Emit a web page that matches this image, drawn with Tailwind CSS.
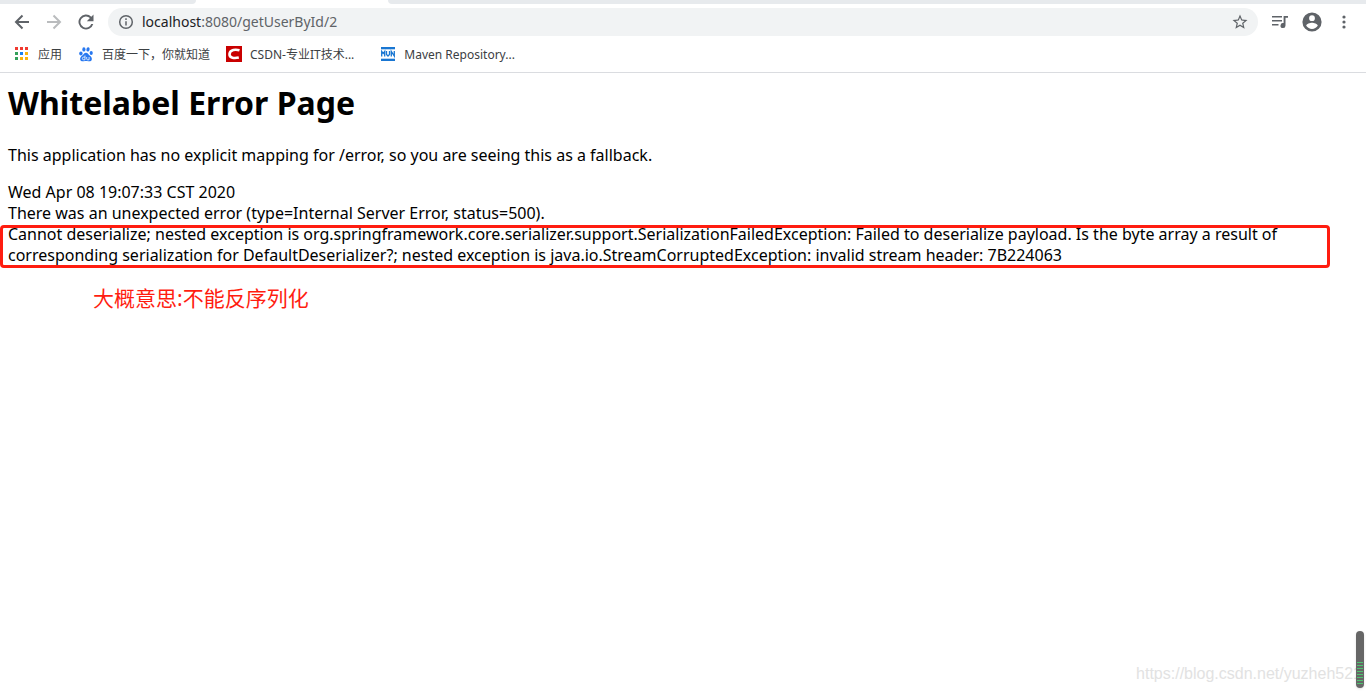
<!DOCTYPE html>
<html lang="zh-CN">
<head>
<meta charset="utf-8">
<meta name="viewport" content="width=device-width, initial-scale=1">
<title>localhost:8080/getUserById/2</title>
<script src="https://cdn.jsdelivr.net/npm/@tailwindcss/browser@4"></script>
</head>
<body class="relative flex min-h-screen flex-col overflow-x-hidden bg-white font-['Noto_Sans','Noto_Sans_CJK_SC',sans-serif] text-black">

<header class="border-b border-[#dadce0]">
  <!-- Bottom edge of the tab strip -->
  <div class="flex h-1">
    <div class="w-49 rounded-br-md bg-[#e7eaed]"></div>
    <div class="w-48"></div>
    <div class="flex-1 rounded-bl-md bg-[#e7eaed]"></div>
  </div>

  <div class="flex h-9 items-center pr-3 pl-3 text-[#5f6368]">
    <nav class="flex gap-3 pr-3">
      <button type="button" aria-label="Back" class="flex size-5 items-center justify-center">
        <svg class="size-5 shrink-0" viewBox="0 0 20 20" fill="none" stroke="currentColor" stroke-width="2"><path d="M17 10H4.500M10.500 3.500 4 10l6.500 6.500"/></svg>
      </button>
      <button type="button" aria-label="Forward" disabled class="flex size-5 items-center justify-center text-[#babcbe]">
        <svg class="size-5 shrink-0" viewBox="0 0 20 20" fill="none" stroke="currentColor" stroke-width="2"><path d="M3 10h12.500M9.500 3.500 16 10l-6.500 6.500"/></svg>
      </button>
      <button type="button" aria-label="Reload" class="flex size-5 items-center justify-center">
        <svg class="size-5 shrink-0" viewBox="0 0 24 24" fill="currentColor"><path d="M18.400 5.600A9 9 0 1 0 20.700 14.300H18.300A6.700 6.700 0 1 1 16.700 7.300L13 11H21V3Z"/></svg>
      </button>
    </nav>
    <div class="flex h-7 min-w-0 flex-1 items-center rounded-full bg-[#f1f3f4] px-2.5">
      <svg class="size-4 shrink-0" viewBox="0 0 16 16" fill="none" stroke="currentColor" stroke-width="1.500"><circle cx="8" cy="8" r="6.300"/><path d="M8 7.200v4.300M8 4.300v1.600"/></svg>
      <a href="#" class="ml-2 flex-1 truncate text-sm"><span class="text-[#202124]">localhost</span>:8080/getUserById/2</a>
      <button type="button" aria-label="Bookmark this page" class="flex size-4 items-center justify-center">
        <svg class="size-[18px] shrink-0" viewBox="0 0 24 24" fill="currentColor"><path d="M22 9.240l-7.190-.62L12 2 9.190 8.630 2 9.240l5.460 4.730L5.820 21 12 17.270 18.180 21l-1.630-7.030L22 9.240zM12 15.400l-3.760 2.270 1-4.280-3.320-2.880 4.380-.38L12 6.100l1.710 4.040 4.380.38-3.320 2.880 1 4.280L12 15.400z"/></svg>
      </button>
    </div>
    <div class="flex items-center gap-3 pl-3">
      <button type="button" aria-label="Media controls" class="flex size-5 items-center justify-center">
        <svg class="size-5 shrink-0" viewBox="0 0 20 20" fill="currentColor"><path d="M2 4h10v1.600H2zM2 8h10v1.600H2zM2 12h6.500v1.600H2zM13.600 4H18v1.700h-2.500v7.800a2.500 2.500 0 1 1-1.900-2.400z"/></svg>
      </button>
      <button type="button" aria-label="Profile" class="flex size-5 items-center justify-center">
        <svg class="size-6 shrink-0" viewBox="0 0 24 24" fill="currentColor"><path d="M12 2.400a9.600 9.600 0 1 0 0 19.200 9.600 9.600 0 0 0 0-19.200zm0 2.900a2.900 2.900 0 1 1 0 5.800 2.900 2.900 0 0 1 0-5.800zm0 13.600a6.900 6.900 0 0 1-5.760-3.100c.03-1.900 3.840-2.950 5.760-2.950s5.730 1.050 5.760 2.950A6.900 6.900 0 0 1 12 18.900z"/></svg>
      </button>
      <button type="button" aria-label="Menu" class="flex size-5 items-center justify-center">
        <svg class="size-5 shrink-0" viewBox="0 0 20 20" fill="currentColor"><circle cx="10" cy="5" r="1.600"/><circle cx="10" cy="10" r="1.600"/><circle cx="10" cy="15" r="1.600"/></svg>
      </button>
    </div>
  </div>

  <nav class="flex h-8 items-center gap-4 pb-1 pl-3.5 text-xs leading-[18px] text-[#3c4043]">
    <a href="#" class="flex items-center gap-2">
      <svg class="size-4 shrink-0" viewBox="0 0 16 16"><path fill="#f03a30" d="M1 1h3v3H1zM6 1h3v3H6zM11 1h3v3h-3z"/><path fill="#34a05a" d="M1 6h3v3H1zM1 11h3v3H1z"/><path fill="#1a80f0" d="M6 6h3v3H6z"/><path fill="#fbb30b" d="M11 6h3v3h-3zM6 11h3v3H6zM11 11h3v3h-3z"/></svg>
      <span class="pt-0.5">应用</span>
    </a>
    <a href="#" class="flex items-center gap-2">
      <svg class="size-4 shrink-0" viewBox="0 0 16 16" fill="#2878f0"><ellipse cx="2.900" cy="7.400" rx="1.700" ry="2"/><ellipse cx="5.900" cy="3.400" rx="1.600" ry="2.200"/><ellipse cx="10" cy="3.400" rx="1.600" ry="2.200" transform="rotate(12 10 3.400)"/><ellipse cx="13.200" cy="7" rx="1.600" ry="2"/><path d="M8 6.700c1.700 0 2.500 1.700 3.700 2.800 1.300 1.200 2.500 2.100 2.100 3.900-.4 2-2.200 2.100-3.600 1.800-1.500-.3-2.900-.3-4.400 0-1.400.3-3.200.1-3.600-1.800-.4-1.800.9-2.700 2.100-3.900C5.500 8.400 6.200 6.700 8 6.700z"/><path d="M7 9.500v4.300H5.700a1.300 1.300 0 0 1 0-2.700H7M8.700 11v1.900q0 .9.900.9h1.500V11" fill="none" stroke="#fff" stroke-width=".8"/></svg>
      <span class="pt-0.5">百度一下，你就知道</span>
    </a>
    <a href="#" class="flex items-center gap-2">
      <svg class="size-4 shrink-0" viewBox="0 0 16 16"><path fill="#c90000" d="M0 0h16v16H0z"/><path d="M13.500 4.300C10 3.300 4 3.300 3.500 8c-.3 4.300 5 4.500 9.300 3.600" fill="none" stroke="#fff" stroke-width="2.600"/></svg>
      <span class="pt-0.5">CSDN-专业IT技术...</span>
    </a>
    <a href="#" class="ml-2.5 flex items-center gap-2">
      <svg class="size-4 shrink-0" viewBox="0 0 16 16"><path fill="#1976d2" d="M1 1h14v2H1zM1 13h14v2H1z"/><path fill="#b9d5f1" d="M1 3h14v1H1zM1 12h14v1H1z"/><path d="M1.700 10.500V5.500l1.500 2 1.500-2v5M6.500 5v3.500L8 10l1.500-1.500V5M11.300 10.500V5.500l3 4.500V5" fill="none" stroke="#1976d2" stroke-width="1.300"/></svg>
      <span class="pt-0.5">Maven Repository...</span>
    </a>
  </nav>
</header>

<main class="flex-1 px-2 pt-2 text-base leading-[21px]">
  <h1 class="text-[32px] leading-[44px] font-bold">Whitelabel Error Page</h1>
  <p class="mt-5">This application has no explicit mapping for /error, so you are seeing this as a fallback.</p>
  <div class="mt-4">Wed Apr 08 19:07:33 CST 2020</div>
  <div>There was an unexpected error (type=Internal Server Error, status=500).</div>
  <div class="relative mr-9">
    Cannot deserialize; nested exception is org.springframework.core.serializer.support.SerializationFailedException: Failed to deserialize payload. Is the byte array a result of corresponding serialization for DefaultDeserializer?; nested exception is java.io.StreamCorruptedException: invalid stream header: 7B224063
    <div class="absolute -inset-x-2 top-px -bottom-0.5 rounded-sm border-3 border-[#ff1d10]"></div>
  </div>
  <p class="mt-[18px] ml-[85px] text-[21px] leading-7 text-[#ff1d10]">大概意思:不能反序列化</p>
</main>

<footer class="flex justify-end pr-1 pb-2 font-['Liberation_Sans',sans-serif] text-base leading-5 text-[#e2e2e2]">https://blog.csdn.net/yuzheh521</footer>

<!-- Floating meter at the window edge -->
<div class="absolute right-0.5 bottom-1 flex h-[57px] w-2 flex-col justify-end rounded-full bg-[#666] px-px pb-0.5 shadow-sm">
  <div class="h-6 bg-[repeating-linear-gradient(to_bottom,#4fc270_0_1px,#666_1px_3px)]"></div>
</div>
</body>
</html>
